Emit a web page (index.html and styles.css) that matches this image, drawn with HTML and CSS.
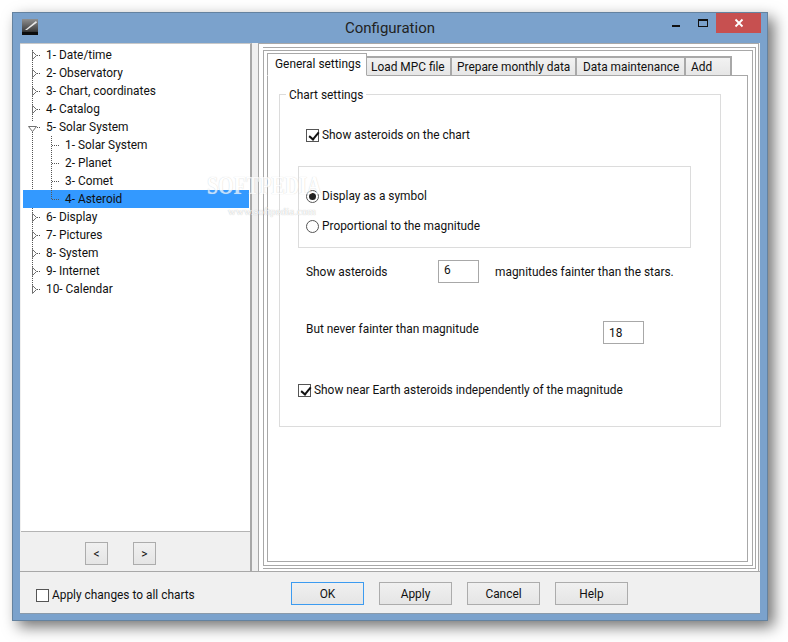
FILE: index.html
```html
<!DOCTYPE html>
<html lang="en">
<head>
<meta charset="utf-8">
<title>Configuration</title>
<link rel="stylesheet" href="styles.css">
</head>
<body>
<svg class="defs" width="0" height="0" aria-hidden="true">
  <defs>
    <symbol id="closed" viewBox="0 0 40 18">
      <path class="dots" d="M9.5 0V18M14 9.5H18"/>
      <path class="tri" d="M9.5 5.5V13.5L13.5 9.5Z"/>
    </symbol>
    <symbol id="first" viewBox="0 0 40 18">
      <path class="dots" d="M9.5 4V18M14 9.5H18"/>
      <path class="tri" d="M9.5 5.5V13.5L13.5 9.5Z"/>
    </symbol>
    <symbol id="last" viewBox="0 0 40 18">
      <path class="dots" d="M9.5 0V9M14 9.5H18"/>
      <path class="tri" d="M9.5 5.5V13.5L13.5 9.5Z"/>
    </symbol>
    <symbol id="open" viewBox="0 0 40 18">
      <path class="dots" d="M9.5 0V4M9.5 14V18M14 9.5H18"/>
      <path class="tri" d="M5.5 8.5H13.5L9.5 13.5Z"/>
    </symbol>
    <symbol id="child" viewBox="0 0 40 18">
      <path class="dots" d="M9.5 0V18M28.5 0V18M29 9.5H37"/>
    </symbol>
    <symbol id="childlast" viewBox="0 0 40 18">
      <path class="dots" d="M28.5 0V9M29 9.5H37"/>
    </symbol>
  </defs>
</svg>
<main class="window">
  <header class="titlebar">
    <svg class="appicon" viewBox="0 0 16 16" width="16" height="16" aria-hidden="true">
      <defs><linearGradient id="sky" x1="0" y1="0" x2="0" y2="1"><stop offset="0" stop-color="#8f8f8f"/><stop offset=".7" stop-color="#444"/><stop offset="1" stop-color="#111"/></linearGradient></defs>
      <rect width="16" height="16" fill="url(#sky)"/>
      <path d="M3 11L14 2L15 3.5L5 11Z" fill="#e8e8e8"/>
      <rect y="13" width="16" height="3" fill="#0c0c0c"/>
    </svg>
    <h1 class="title">Configuration</h1>
    <div class="caption">
      <span class="min"></span>
      <span class="max"></span>
      <span class="close"><svg viewBox="0 0 10 10" width="10" height="10" aria-hidden="true"><path d="M1.5 1.5L8.5 8.5M8.5 1.5L1.5 8.5" stroke="#fff" stroke-width="1.8" fill="none"/></svg></span>
    </div>
  </header>
  <div class="client">
    <div class="panes">
      <aside class="left">
        <ul class="tree">
          <li class="node"><svg class="twig"><use href="#first" width="40" height="18"/></svg>1- Date/time</li>
          <li class="node"><svg class="twig"><use href="#closed" width="40" height="18"/></svg>2- Observatory</li>
          <li class="node"><svg class="twig"><use href="#closed" width="40" height="18"/></svg>3- Chart, coordinates</li>
          <li class="node"><svg class="twig"><use href="#closed" width="40" height="18"/></svg>4- Catalog</li>
          <li class="node"><svg class="twig"><use href="#open" width="40" height="18"/></svg>5- Solar System</li>
          <li class="node sub"><svg class="twig"><use href="#child" width="40" height="18"/></svg>1- Solar System</li>
          <li class="node sub"><svg class="twig"><use href="#child" width="40" height="18"/></svg>2- Planet</li>
          <li class="node sub"><svg class="twig"><use href="#child" width="40" height="18"/></svg>3- Comet</li>
          <li class="node sub selected"><svg class="twig"><use href="#childlast" width="40" height="18"/></svg>4- Asteroid</li>
          <li class="node"><svg class="twig"><use href="#closed" width="40" height="18"/></svg>6- Display</li>
          <li class="node"><svg class="twig"><use href="#closed" width="40" height="18"/></svg>7- Pictures</li>
          <li class="node"><svg class="twig"><use href="#closed" width="40" height="18"/></svg>8- System</li>
          <li class="node"><svg class="twig"><use href="#closed" width="40" height="18"/></svg>9- Internet</li>
          <li class="node"><svg class="twig"><use href="#last" width="40" height="18"/></svg>10- Calendar</li>
        </ul>
        <div class="pager">
          <button class="btn small">&lt;</button>
          <button class="btn small">&gt;</button>
        </div>
      </aside>
      <div class="splitter"></div>
      <section class="right">
        <div class="frame2">
          <div class="frame3">
            <nav class="tabs">
              <span class="tab active">General settings</span>
              <span class="tab t-load">Load MPC file</span>
              <span class="tab t-prep">Prepare monthly data</span>
              <span class="tab t-data">Data maintenance</span>
              <span class="tab t-add">Add</span>
            </nav>
            <div class="page">
              <fieldset class="group">
                <span class="legend">Chart settings</span>
                <label class="check first-check"><span class="box checked"></span>Show asteroids on the chart</label>
                <div class="radios">
                  <label class="radio r1"><span class="dot on"></span>Display as a symbol</label>
                  <label class="radio r2"><span class="dot"></span>Proportional to the magnitude</label>
                </div>
                <div class="field f1">
                  <span class="f1-label">Show asteroids</span>
                  <input class="num" value="6" readonly>
                  <span class="f1-after">magnitudes fainter than the stars.</span>
                </div>
                <div class="field f2">
                  <span class="f2-label">But never fainter than magnitude</span>
                  <input class="num n2" value="18" readonly>
                </div>
                <label class="check near"><span class="box checked"></span>Show near Earth asteroids independently of the magnitude</label>
              </fieldset>
            </div>
          </div>
        </div>
      </section>
    </div>
    <footer class="footer">
      <label class="check apply"><span class="box"></span>Apply changes to all charts</label>
      <div class="actions">
        <button class="btn wide default">OK</button>
        <button class="btn wide">Apply</button>
        <button class="btn wide">Cancel</button>
        <button class="btn wide">Help</button>
      </div>
    </footer>
  </div>
  <div class="watermark" aria-hidden="true"><span class="wm-big">SOFTPEDIA</span><span class="wm-small">www.softpedia.com</span></div>
</main>
</body>
</html>
```
FILE: styles.css
```css
* { box-sizing: border-box; }
html, body { margin: 0; padding: 0; background: #fff; }
body { width: 788px; height: 642px; overflow: hidden; font: 11.9px/18px Roboto, "Noto Sans", sans-serif; color: #111; }
.defs { position: absolute; }
.window {
  position: relative; margin: 12px 0 0 12px; width: 756px; height: 609px;
  background: #7ba2cc; border: 1px solid #64829f; padding: 0 7px 6px;
  box-shadow: 6px 6px 14px rgba(0,0,0,.55);
  display: flex; flex-direction: column;
}
.titlebar { height: 30px; display: flex; align-items: flex-start; flex: none; position: relative; }
.appicon { margin: 6px 0 0 2px; flex: none; }
.title { margin: 0; position: absolute; left: 0; right: 0; top: 5px; text-align: center; font-size: 15px; font-weight: 400; line-height: 20px; color: #222; }
.caption { margin-left: auto; display: flex; align-items: flex-start; position: relative; margin-right: -1px; }
.min { width: 8px; height: 2px; background: #111; margin-top: 12px; }
.max { width: 10px; height: 8px; border: 1px solid #111; border-top-width: 2px; margin: 6px 0 0 18px; }
.close { width: 45px; height: 20px; background: #c75050; margin-left: 8px; display: flex; align-items: center; justify-content: center; }
.client { flex: 1; background: #f0f0f0; display: flex; flex-direction: column; min-height: 0; border-bottom: 1px solid #8a9aaa; }
.panes { height: 529px; display: flex; flex: none; border-bottom: 1px solid #a8a8a8; }
.left { width: 232px; flex: none; display: flex; flex-direction: column; border-right: 2px solid #a8a8a8; padding-left: 1px; border-top: 1px solid #c8c8c8; }
.tree { list-style: none; margin: 0; padding: 2px 0 0 2px; flex: 1; background: #fff; border-bottom: 1px solid #b4b4b4; }
.node { height: 18px; display: flex; align-items: center; width: 226px; white-space: nowrap; color: #111; }
.twig { width: 23px; height: 18px; flex: none; overflow: hidden; }
.sub .twig { width: 42px; }
.dots { fill: none; stroke: #555; stroke-width: 1; stroke-dasharray: 1 1; }
.tri { fill: #fff; stroke: #707070; stroke-width: 1; }
.selected { background: #3399ff; }
.pager { height: 39px; flex: none; padding: 10px 0 0 64px; display: flex; gap: 25px; }
.splitter { width: 6px; flex: none; background: #f0f0f0; }
.right { flex: 1; background: #fff; padding: 3px 2px 2px 4px; border: 1px solid #a8a8a8; border-bottom: 0; margin-right: 1px; display: flex; }
.frame2 { flex: 1; border: 1px solid #a8a8a8; border-left: 0; padding: 2px 2px 2px 0; background: #fff; display: flex; }
.frame3 { flex: 1; border: 1px solid #a8a8a8; padding: 2px 4px 3px 3px; background: #fff; display: flex; flex-direction: column; }
.tabs { display: flex; align-items: flex-end; height: 23px; flex: none; position: relative; z-index: 1; margin-bottom: -1px; }
.tab { height: 20px; line-height: 18px; border: solid #a8a8a8; border-width: 2px 2px 1px 0; background: linear-gradient(#f2f2f2, #e6e6e6); padding: 0 0 0 4px; white-space: nowrap; flex: none; }
.tab.active { height: 23px; width: 100px; background: #fff; border: 1px solid #a8a8a8; border-bottom-color: #fff; padding-left: 7px; line-height: 20px; }
.t-load { width: 85px; }
.t-prep { width: 125px; padding-left: 5px; }
.t-data { width: 109px; padding-left: 6px; }
.t-add { width: 46px; padding-left: 5px; }
.page { flex: 1; border: 1px solid #a8a8a8; background: #fff; padding: 18px 26px 0 11px; min-height: 0; }
.group { position: relative; margin: 0; padding: 0; height: 333px; border: 1px solid #dcdcdc; display: block; }
.legend { position: absolute; left: 6px; top: -9px; background: #fff; padding: 0 3px; line-height: 18px; }
label { display: flex; align-items: center; height: 18px; white-space: nowrap; }
.box { width: 13px; height: 13px; border: 1px solid #555; background: #fff; margin-right: 3px; flex: none; position: relative; }
.box.checked::after { content: ""; position: absolute; left: 3.5px; top: 0.5px; width: 4px; height: 8px; border: solid #111; border-width: 0 2px 2px 0; transform: rotate(40deg); }
.first-check { margin: 31px 0 0 26px; }
.radios { margin: 22px 0 0 18px; width: 393px; height: 82px; border: 1px solid #dcdcdc; padding-top: 20px; }
.radio { margin-left: 7px; }
.r2 { margin-top: 12px; }
.dot { width: 13px; height: 13px; border: 1px solid #555; border-radius: 50%; background: #fff; margin-right: 3px; flex: none; display: flex; align-items: center; justify-content: center; }
.dot.on::after { content: ""; width: 7px; height: 7px; border-radius: 50%; background: #222; }
.field { position: relative; display: flex; align-items: flex-start; margin-left: 26px; }
.f1 { margin-top: 12px; height: 23px; }
.f1-label { width: 132px; line-height: 25px; }
.f1-after { margin-left: 16px; line-height: 25px; }
.f2 { margin-top: 38px; height: 23px; }
.f2-label { width: 297px; line-height: 17px; }
.num { width: 41px; height: 23px; border: 1px solid #a8a8a8; background: #fff; padding: 0 0 3px 5px; font: inherit; color: #111; outline: none; }
.n2 { padding: 1px 0 0 5px; }
.near { margin: 37px 0 0 18px; }
.footer { flex: 1; position: relative; display: flex; align-items: flex-start; padding: 0 0 0 16px; }
.apply { margin-top: 14px; }
.actions { position: absolute; left: 271px; top: 10px; display: flex; gap: 15px; }
.btn { font: inherit; color: #111; height: 23px; border: 1px solid #acacac; background: linear-gradient(#f0f0f0, #e5e5e5); padding: 0; line-height: 18px; }
.small { width: 23px; font-size: 12px; }
.wide { width: 73px; }
.default { border-color: #3c9bf0; }
.watermark { position: absolute; left: 194px; top: 162px; pointer-events: none; display: flex; flex-direction: column; align-items: flex-start; }
.wm-big { font: 700 25px/22px "Liberation Serif", serif; color: #fff; text-shadow: 0 0 1px #bbb; opacity: .7; transform: scaleX(.8); transform-origin: left center; }
.wm-small { margin: 9px 0 0 21px; font: 11px/10px "Liberation Serif", serif; color: #fff; text-shadow: 0 0 1px #aaa; }
```
